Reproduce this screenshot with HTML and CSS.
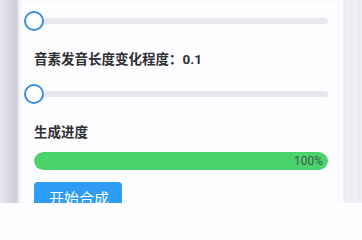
FILE: index.html
```html
<!DOCTYPE html>
<html lang="zh">
<head>
<meta charset="utf-8">
<meta name="viewport" content="width=362, initial-scale=1">
<link rel="stylesheet" href="styles.css">
</head>
<body>
<div class="frame">
  <div class="edge-left"></div>
  <main class="panel">
    <div class="slider">
      <div class="track"></div>
      <div class="thumb"></div>
    </div>
    <div class="label">音素发音长度变化程度：<span class="num">0.1</span></div>
    <div class="slider slider-2">
      <div class="track"></div>
      <div class="thumb"></div>
    </div>
    <div class="label title">生成进度</div>
    <div class="progress">
      <div class="progress-fill"><span class="progress-text">100%</span></div>
    </div>
    <div class="actions">
      <button class="btn">开始合成</button>
    </div>
  </main>
  <div class="edge-right"></div>
</div>
</body>
</html>
```

FILE: styles.css
```css
* { box-sizing: border-box; }
html, body {
  margin: 0;
  padding: 0;
  height: 203px;
  overflow: hidden;
  background: #fdfcff;
  font-family: "Noto Sans", "Noto Sans CJK SC", sans-serif;
}
.frame {
  display: flex;
  height: 203px;
  overflow: hidden;
}
.edge-left {
  width: 18px;
  flex: none;
  background: linear-gradient(to right, #e6e6ee 0%, #dcdce4 40%, #cdcdd6 85%, #d6d6de 100%);
}
.edge-right {
  width: 19px;
  flex: none;
  background: linear-gradient(to right, #f0f0f6 0px, #e9e9f2 3px, #f1f1f7 5px, #ebebf3 9px, #f2f2f8 12px, #eaeaf2 16px, #efeff6 19px);
}
.panel {
  flex: 1;
  min-width: 0;
  padding: 11px 15px 0 16px;
  display: flex;
  flex-direction: column;
  overflow: hidden;
  background: #fdfcff;
  box-shadow: inset 2px 0 2px rgba(200,200,215,0.35);
}
.slider {
  position: relative;
  height: 20px;
  flex: none;
  display: flex;
  align-items: center;
}
.track {
  flex: 1;
  height: 6px;
  border-radius: 3px;
  background: #e8e7ef;
}
.thumb {
  position: absolute;
  left: -10px;
  top: 0;
  width: 20px;
  height: 20px;
  border-radius: 50%;
  border: 2px solid #3a8fe0;
  background: #ffffff;
}
.label {
  margin-top: 18px;
  height: 20px;
  flex: none;
  line-height: 20px;
  font-size: 13.5px;
  font-weight: 700;
  color: #2f3033;
  white-space: nowrap;
}
.num {
  font-family: "Roboto", "Noto Sans", sans-serif;
  font-weight: 700;
}
.slider-2 {
  margin-top: 15px;
}
.title {
  margin-top: 18px;
}
.progress {
  margin-top: 10px;
  height: 18px;
  flex: none;
  border-radius: 9px;
  background: #e8e7ef;
  overflow: hidden;
}
.progress-fill {
  width: 100%;
  height: 100%;
  border-radius: 9px;
  background: #4ad36a;
  display: flex;
  align-items: center;
  justify-content: flex-end;
  padding-right: 5px;
}
.progress-text {
  font-family: "Roboto", "Noto Sans", sans-serif;
  font-size: 12px;
  color: #48534b;
}
.actions {
  margin-top: 12px;
  flex: none;
  display: flex;
}
.btn {
  width: 88px;
  height: 32px;
  flex: none;
  border: none;
  border-radius: 4px;
  background: #2f9cf5;
  color: #ffffff;
  font-family: "Noto Sans CJK SC", sans-serif;
  font-size: 15px;
  line-height: 32px;
  padding: 0 0 0 2px;
}
```
